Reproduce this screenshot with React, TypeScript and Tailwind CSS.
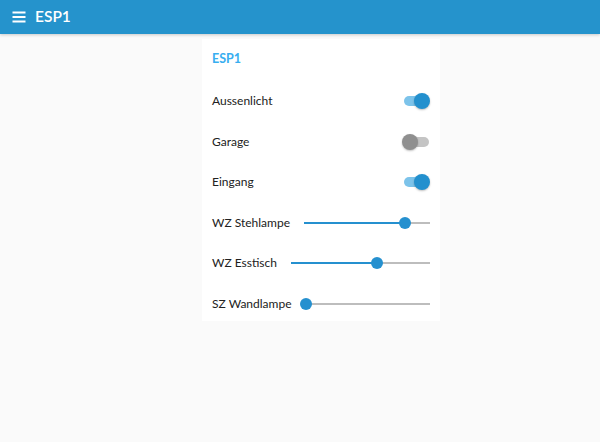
// Static mock of a small dashboard group: a header bar and one card of
// switches and sliders.

function Toggle({ on }: { on: boolean }) {
  return (
    <div className="relative h-[16px] w-[28px]">
      <div
        className={`absolute left-[2px] top-[3px] h-[10px] w-[25px] rounded-full ${
          on ? "bg-[#7cc3ea]" : "bg-[#c4c4c4]"
        }`}
      />
      <div
        className={`absolute top-0 h-[16px] w-[16px] rounded-full shadow-[0_1px_2px_rgba(0,0,0,0.25)] ${
          on ? "left-[12px] bg-[#2390ce]" : "left-0 bg-[#8f8f8f]"
        }`}
      />
    </div>
  );
}

function Slider({ value }: { value: number }) {
  return (
    <div className="relative h-[14px] flex-1">
      <div className="absolute left-0 right-0 top-[6px] h-[2px] bg-[#bdbdbd]" />
      <div
        className="absolute left-0 top-[6px] h-[2px] bg-[#2590cf]"
        style={{ width: `${value}%` }}
      />
      <div
        className="absolute top-[1px] h-[12px] w-[12px] -translate-x-1/2 rounded-full bg-[#2590cf]"
        style={{ left: `${value}%` }}
      />
    </div>
  );
}

const rows = [
  { label: "Aussenlicht", kind: "toggle", on: true },
  { label: "Garage", kind: "toggle", on: false },
  { label: "Eingang", kind: "toggle", on: true },
  { label: "WZ Stehlampe", kind: "slider", value: 80 },
  { label: "WZ Esstisch", kind: "slider", value: 62 },
  { label: "SZ Wandlampe", kind: "slider", value: 0 },
];

export default function App() {
  return (
    <div
      className="h-[442px] w-[600px] bg-[#fafafa] text-[12px] text-[#212121]"
      style={{ fontFamily: 'Lato, "Noto Sans", sans-serif' }}
    >
      <div className="flex h-[34px] items-center gap-[9px] bg-[#2593cc] px-[12px] text-white shadow-[0_1px_3px_rgba(0,0,0,0.2)]">
        <svg width="14" height="12" viewBox="0 0 14 12" fill="none">
          <path d="M0.5 1.5h13M0.5 6h13M0.5 10.5h13" stroke="white" strokeWidth="1.8" />
        </svg>
        <span className="text-[15.5px] font-semibold">ESP1</span>
      </div>
      <div className="flex justify-center pt-[5px]">
        <div className="ml-[42px] w-[238px] bg-white px-[10px] pt-[10px]">
          <div className="flex h-[20px] items-center text-[12.5px] font-bold text-[#38aef0]">
            ESP1
          </div>
          <div className="mt-[15px] flex flex-col gap-[6.6px]">
            {rows.map((r) => (
              <div key={r.label} className="flex h-[34px] items-center">
                <span className="whitespace-nowrap">{r.label}</span>
                {r.kind === "toggle" ? (
                  <div className="ml-auto">
                    <Toggle on={!!r.on} />
                  </div>
                ) : (
                  <div className="ml-[14px] flex flex-1">
                    <Slider value={r.value ?? 0} />
                  </div>
                )}
              </div>
            ))}
          </div>
        </div>
      </div>
    </div>
  );
}
